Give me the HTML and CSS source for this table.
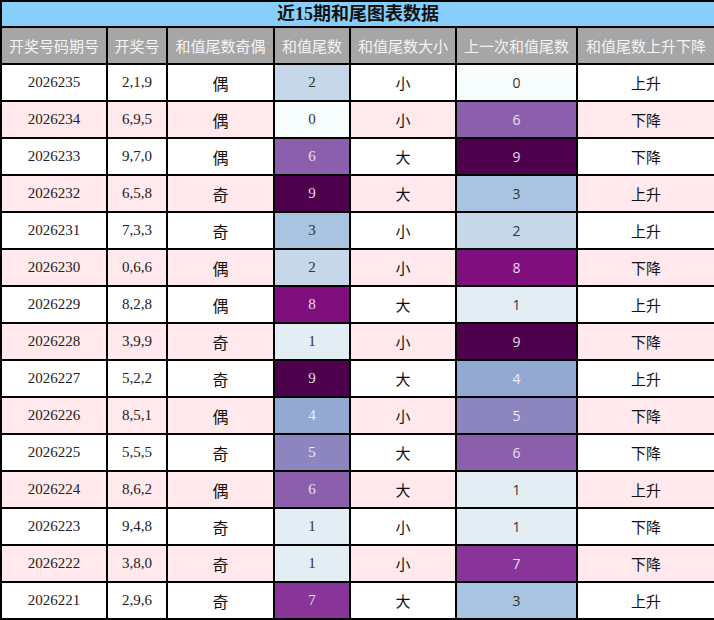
FILE: index.html
```html
<!DOCTYPE html>
<html lang="zh">
<head>
<meta charset="utf-8">
<title>近15期和尾图表数据</title>
<link rel="stylesheet" href="styles.css">
</head>
<body>
<table class="tbl">
  <colgroup>
    <col class="c1"><col class="c2"><col class="c3"><col class="c4"><col class="c5"><col class="c6"><col class="c7">
  </colgroup>
  <thead>
    <tr class="title-row"><th colspan="7">近15期和尾图表数据</th></tr>
    <tr class="head-row">
      <th>开奖号码期号</th><th>开奖号</th><th>和值尾数奇偶</th><th>和值尾数</th><th>和值尾数大小</th><th>上一次和值尾数</th><th>和值尾数上升下降</th>
    </tr>
  </thead>
  <tbody>
    <tr><td class="num">2026235</td><td class="num">2,1,9</td><td class="cjk oe">偶</td><td class="v v2">2</td><td class="cjk">小</td><td class="p v0">0</td><td class="cjk">上升</td></tr>
    <tr class="alt"><td class="num">2026234</td><td class="num">6,9,5</td><td class="cjk oe">偶</td><td class="v v0">0</td><td class="cjk">小</td><td class="p v6">6</td><td class="cjk">下降</td></tr>
    <tr><td class="num">2026233</td><td class="num">9,7,0</td><td class="cjk oe">偶</td><td class="v v6">6</td><td class="cjk">大</td><td class="p v9">9</td><td class="cjk">下降</td></tr>
    <tr class="alt"><td class="num">2026232</td><td class="num">6,5,8</td><td class="cjk oe">奇</td><td class="v v9">9</td><td class="cjk">大</td><td class="p v3">3</td><td class="cjk">上升</td></tr>
    <tr><td class="num">2026231</td><td class="num">7,3,3</td><td class="cjk oe">奇</td><td class="v v3">3</td><td class="cjk">小</td><td class="p v2">2</td><td class="cjk">上升</td></tr>
    <tr class="alt"><td class="num">2026230</td><td class="num">0,6,6</td><td class="cjk oe">偶</td><td class="v v2">2</td><td class="cjk">小</td><td class="p v8">8</td><td class="cjk">下降</td></tr>
    <tr><td class="num">2026229</td><td class="num">8,2,8</td><td class="cjk oe">偶</td><td class="v v8">8</td><td class="cjk">大</td><td class="p v1">1</td><td class="cjk">上升</td></tr>
    <tr class="alt"><td class="num">2026228</td><td class="num">3,9,9</td><td class="cjk oe">奇</td><td class="v v1">1</td><td class="cjk">小</td><td class="p v9">9</td><td class="cjk">下降</td></tr>
    <tr><td class="num">2026227</td><td class="num">5,2,2</td><td class="cjk oe">奇</td><td class="v v9">9</td><td class="cjk">大</td><td class="p v4">4</td><td class="cjk">上升</td></tr>
    <tr class="alt"><td class="num">2026226</td><td class="num">8,5,1</td><td class="cjk oe">偶</td><td class="v v4">4</td><td class="cjk">小</td><td class="p v5">5</td><td class="cjk">下降</td></tr>
    <tr><td class="num">2026225</td><td class="num">5,5,5</td><td class="cjk oe">奇</td><td class="v v5">5</td><td class="cjk">大</td><td class="p v6">6</td><td class="cjk">下降</td></tr>
    <tr class="alt"><td class="num">2026224</td><td class="num">8,6,2</td><td class="cjk oe">偶</td><td class="v v6">6</td><td class="cjk">大</td><td class="p v1">1</td><td class="cjk">上升</td></tr>
    <tr><td class="num">2026223</td><td class="num">9,4,8</td><td class="cjk oe">奇</td><td class="v v1">1</td><td class="cjk">小</td><td class="p v1">1</td><td class="cjk">下降</td></tr>
    <tr class="alt"><td class="num">2026222</td><td class="num">3,8,0</td><td class="cjk oe">奇</td><td class="v v1">1</td><td class="cjk">小</td><td class="p v7">7</td><td class="cjk">下降</td></tr>
    <tr><td class="num">2026221</td><td class="num">2,9,6</td><td class="cjk oe">奇</td><td class="v v7">7</td><td class="cjk">大</td><td class="p v3">3</td><td class="cjk">上升</td></tr>
  </tbody>
</table>
</body>
</html>
```
FILE: styles.css
```css
html, body {
  margin: 0;
  padding: 0;
  background: #ffffff;
}
.tbl {
  width: 714px;
  border-collapse: collapse;
  table-layout: fixed;
  font-family: "Liberation Serif", "Noto Sans CJK SC", serif;
  color: #222;
}
.c1 { width: 106px; }
.c2 { width: 60px; }
.c3 { width: 107px; }
.c4 { width: 76px; }
.c5 { width: 106px; }
.c6 { width: 121px; }
.c7 { width: 138px; }
.tbl th, .tbl td {
  border: 2px solid #000;
  padding: 0;
  text-align: center;
  vertical-align: middle;
  overflow: hidden;
  white-space: nowrap;
}
.title-row th {
  height: 24px;
  background: #87cefa;
  font-family: "Liberation Serif", "Noto Sans CJK SC", serif;
  font-weight: bold;
  font-size: 18px;
  color: #111;
  line-height: 24px;
}
.head-row th {
  height: 35px;
  background: #a6a6a6;
  color: #f4f4f4;
  font-family: "Noto Sans CJK SC", sans-serif;
  font-weight: normal;
  font-size: 15px;
}
.tbl tbody td {
  height: 35px;
  font-size: 15px;
}
.tbl tbody tr.alt td {
  background: #ffe9ec;
}
.cjk {
  font-family: "Noto Sans CJK SC", sans-serif;
  color: #111;
}
.tbl tbody td.cjk { font-size: 15px; }
.tbl tbody td.oe { font-size: 16px; }
.num { color: #222; }
.p {
  font-family: "Open Sans", sans-serif;
}
.tbl tbody td.p { font-size: 14px; }
.tbl tbody tr td.v0 { background: #f7fcfd; color: #333; }
.tbl tbody tr td.v1 { background: #e2edf4; color: #333; }
.tbl tbody tr td.v2 { background: #c5d7e8; color: #333; }
.tbl tbody tr td.v3 { background: #a9c4e0; color: #333; }
.tbl tbody tr td.v4 { background: #94a9d1; color: #eef; }
.tbl tbody tr td.v5 { background: #8c85be; color: #eef; }
.tbl tbody tr td.v6 { background: #8c5fad; color: #e8e0ee; }
.tbl tbody tr td.v7 { background: #883498; color: #e8e0ee; }
.tbl tbody tr td.v8 { background: #7f0f7d; color: #eedcee; }
.tbl tbody tr td.v9 { background: #4d004b; color: #e8dce8; }
```
